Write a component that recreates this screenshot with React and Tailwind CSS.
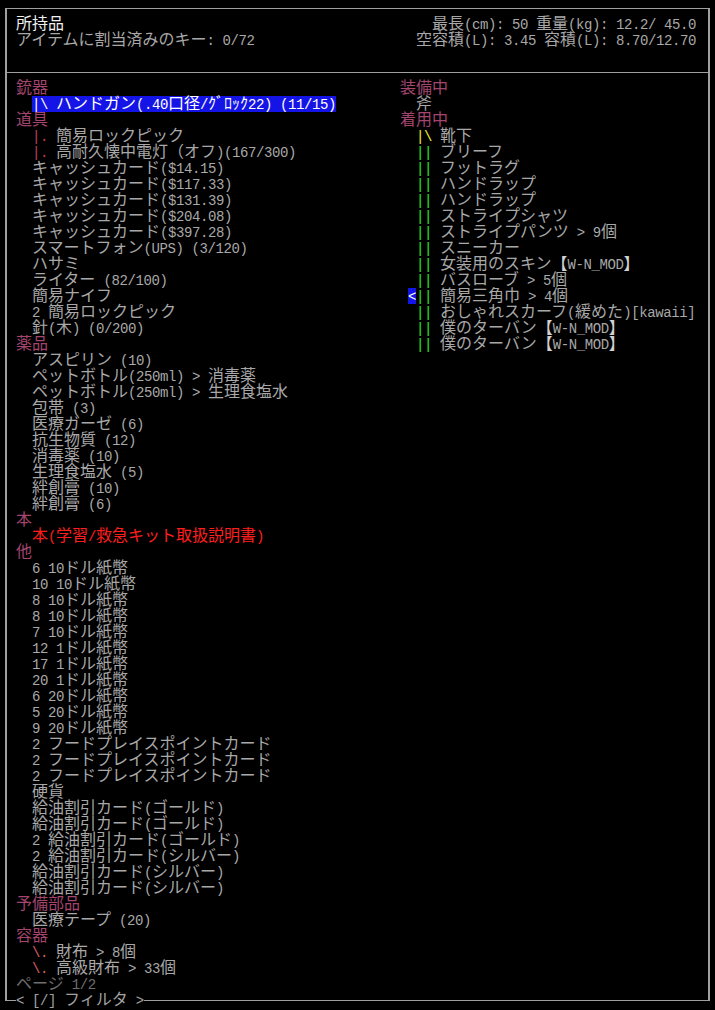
import React from 'react';

const LAT = "inline-block h-4 leading-[18.5px] font-['Liberation_Mono',monospace] text-[14px] tracking-[-0.4px]";
const CJK = "inline-block h-4 leading-3 font-['Noto_Sans_CJK_JP',sans-serif] text-[16px]";

const HDR = 'text-[#a3456f]';
const TXT = 'text-[#a8a8a8]';
const WHT = 'text-[#f0f0f0]';
const PFX = 'text-[#c0404f]';
const PFX2 = 'text-[#dc5f64]';
const RED = 'text-[#ff1e1e]';
const GRN = 'text-[#28e628]';
const YEL = 'text-[#f0f028]';
const BRK = 'text-[#d2d2d2]';
const DIM = 'text-[#6e6e6e]';
const HL = 'inline-block h-4 bg-[#1414e6] text-white';

function T({ s }) {
  const runs = [];
  for (const ch of s) {
    const a = ch.codePointAt(0) < 0x80;
    const last = runs[runs.length - 1];
    if (last && last.a === a) last.t += ch;
    else runs.push({ a, t: ch });
  }
  return runs.map((r, i) => (
    <span key={i} className={r.a ? LAT : CJK}>
      {r.t}
    </span>
  ));
}

function Row({ segs, ind }) {
  return (
    <div
      className={`h-4 leading-3 whitespace-pre font-['Noto_Sans_CJK_JP',sans-serif] text-[16px] ${ind ? 'pl-4' : ''}`}
    >
      {segs.map(([t, c], i) => (
        <span key={i} className={c}>
          <T s={t} />
        </span>
      ))}
    </div>
  );
}

const H = (t) => ({ segs: [[t, HDR]] });
const I = (t) => ({ segs: [[t, TXT]], ind: true });
const P = (p, t) => ({ segs: [[p, PFX], [t, TXT]], ind: true });
const P2 = (p, t) => ({ segs: [[p, PFX2], [t, TXT]], ind: true });

const left = [
  H('銃器'),
  { segs: [['|\\ ハンドガン(.40口径/ｸﾞﾛｯｸ22) (11/15)', HL]], ind: true },
  H('道具'),
  P('|.', ' 簡易ロックピック'),
  P('|.', ' 高耐久懐中電灯（オフ)(167/300)'),
  I('キャッシュカード($14.15)'),
  I('キャッシュカード($117.33)'),
  I('キャッシュカード($131.39)'),
  I('キャッシュカード($204.08)'),
  I('キャッシュカード($397.28)'),
  I('スマートフォン(UPS) (3/120)'),
  I('ハサミ'),
  I('ライター (82/100)'),
  I('簡易ナイフ'),
  I('2 簡易ロックピック'),
  I('針(木) (0/200)'),
  H('薬品'),
  I('アスピリン (10)'),
  I('ペットボトル(250ml) > 消毒薬'),
  I('ペットボトル(250ml) > 生理食塩水'),
  I('包帯 (3)'),
  I('医療ガーゼ (6)'),
  I('抗生物質 (12)'),
  I('消毒薬 (10)'),
  I('生理食塩水 (5)'),
  I('絆創膏 (10)'),
  I('絆創膏 (6)'),
  H('本'),
  { segs: [['本(学習/救急キット取扱説明書)', RED]], ind: true },
  H('他'),
  I('6 10ドル紙幣'),
  I('10 10ドル紙幣'),
  I('8 10ドル紙幣'),
  I('8 10ドル紙幣'),
  I('7 10ドル紙幣'),
  I('12 1ドル紙幣'),
  I('17 1ドル紙幣'),
  I('20 1ドル紙幣'),
  I('6 20ドル紙幣'),
  I('5 20ドル紙幣'),
  I('9 20ドル紙幣'),
  I('2 フードプレイスポイントカード'),
  I('2 フードプレイスポイントカード'),
  I('2 フードプレイスポイントカード'),
  I('硬貨'),
  I('給油割引カード(ゴールド)'),
  I('給油割引カード(ゴールド)'),
  I('2 給油割引カード(ゴールド)'),
  I('2 給油割引カード(シルバー)'),
  I('給油割引カード(シルバー)'),
  I('給油割引カード(シルバー)'),
  H('予備部品'),
  I('医療テープ (20)'),
  H('容器'),
  P2('\\.', ' 財布 > 8個'),
  P2('\\.', ' 高級財布 > 33個'),
  { segs: [['ページ 1/2', DIM]] },
];

const W = (t, extra) => ({
  segs: [['  ', TXT], ['||', GRN], [' ' + t, TXT], ...(extra || [])],
});
const MOD = [
  ['【', BRK],
  ['W-N_MOD', TXT],
  ['】', BRK],
];

const right = [
  H('装備中'),
  { segs: [['  斧', TXT]] },
  H('着用中'),
  { segs: [['  ', TXT], ['|\\', YEL], [' 靴下', TXT]] },
  W('ブリーフ'),
  W('フットラグ'),
  W('ハンドラップ'),
  W('ハンドラップ'),
  W('ストライプシャツ'),
  W('ストライプパンツ > 9個'),
  W('スニーカー'),
  W('女装用のスキン', MOD),
  W('バスローブ > 5個'),
  {
    segs: [
      [' ', TXT],
      ['<', 'inline-block h-4 bg-[#1414e6] text-white'],
      ['||', GRN],
      [' 簡易三角巾 > 4個', TXT],
    ],
  },
  W('おしゃれスカーフ(緩めた)[kawaii]'),
  W('僕のターバン', MOD),
  W('僕のターバン', MOD),
];

export default function App() {
  return (
    <div className="w-[715px] h-[1010px] overflow-hidden bg-black pt-[8px] pl-[5px]">
      <div className="relative w-[705px] border-x-2 border-y border-[#a0a0a0]">
        <div className="flex justify-between border-b border-[#a0a0a0] pl-[9px] pr-[12px] pt-[7px] pb-[24px]">
          <div>
            <Row segs={[['所持品', WHT]]} />
            <Row segs={[['アイテムに割当済みのキー: 0/72', TXT]]} />
          </div>
          <div className="flex flex-col items-end">
            <Row segs={[['最長(cm): 50 重量(kg): 12.2/ 45.0', TXT]]} />
            <Row segs={[['空容積(L): 3.45 容積(L): 8.70/12.70', TXT]]} />
          </div>
        </div>
        <div className="grid grid-cols-[384px_1fr] pl-[9px] pt-[7px] pb-[8px]">
          <div>
            {left.map((r, i) => (
              <Row key={i} {...r} />
            ))}
          </div>
          <div>
            {right.map((r, i) => (
              <Row key={i} {...r} />
            ))}
          </div>
        </div>
        <div className="absolute left-[9px] -bottom-[8px] bg-black">
          <Row segs={[['< [/] フィルタ >', 'text-[#a0a0a0]']]} />
        </div>
      </div>
    </div>
  );
}
